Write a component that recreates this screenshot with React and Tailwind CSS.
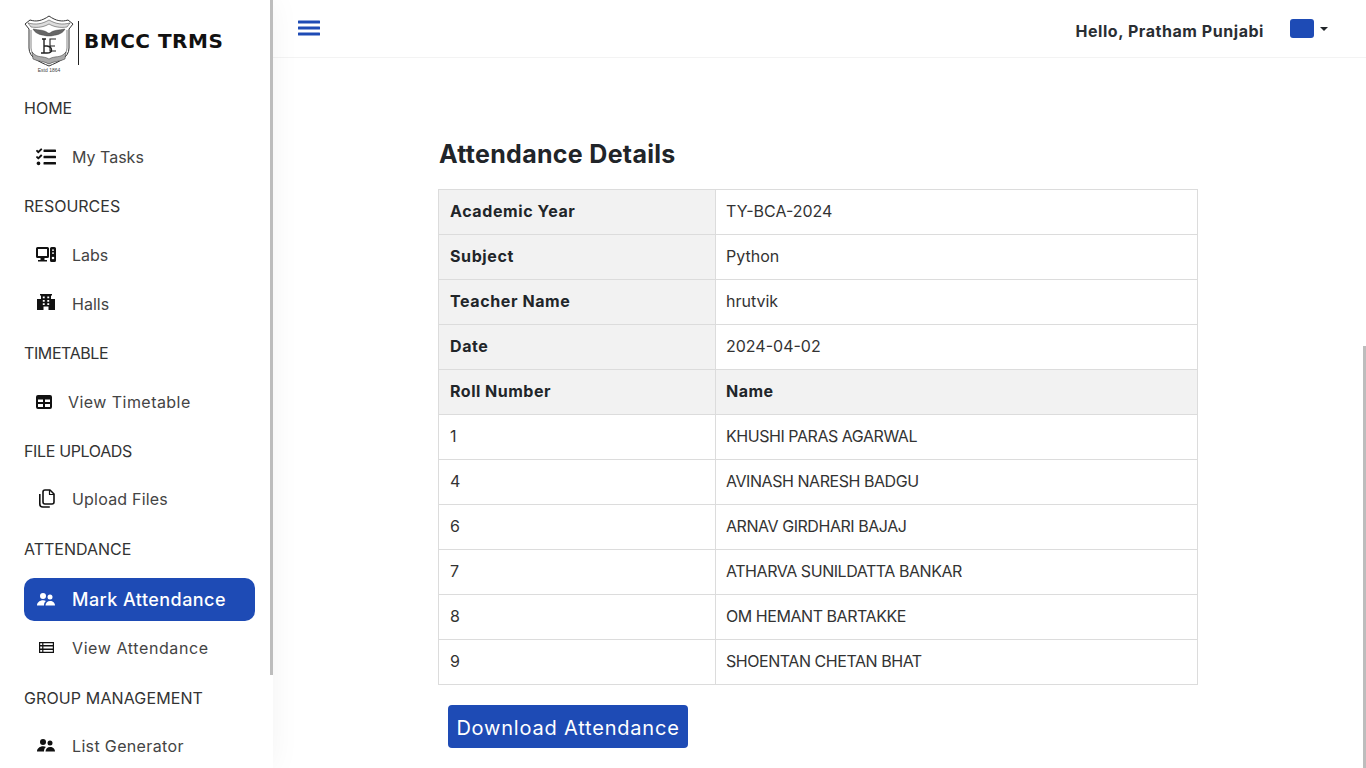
import { FaTasks } from 'react-icons/fa'

function LabsIcon({ className }) {
  return (
    <svg className={className} viewBox="0 0 20 16" fill="currentColor">
      <path fillRule="evenodd" d="M1.5 0h10A1.5 1.5 0 0 1 13 1.5v8a1.5 1.5 0 0 1-1.5 1.5H8.5v2H11v1.5H2V13h2.5v-2h-3A1.5 1.5 0 0 1 0 9.500v-8A1.500 1.500 0 0 1 1.500 0zM2 2v7h9V2z" />
      <path fillRule="evenodd" d="M15.500 0h3A1.500 1.500 0 0 1 20 1.500v12a1.500 1.500 0 0 1-1.500 1.500h-3a1.500 1.500 0 0 1-1.500-1.500v-12A1.500 1.500 0 0 1 15.500 0zM16 2.500v1.200h2V2.500zm0 3v1.200h2V5.500zm1 4.200a1.300 1.300 0 1 0 0 2.600 1.300 1.300 0 0 0 0-2.600z" />
    </svg>
  )
}

function HallsIcon({ className }) {
  return (
    <svg className={className} viewBox="0 0 18 16" fill="currentColor">
      <path fillRule="evenodd" d="M3 0h12v1.500h-1V5h4v11h-6.500v-3.500h-5V16H0V5h4V1.500H3zM5.800 2.500v1.800h1.900V2.500zm4.500 0v1.800h1.900V2.500zM5.800 6v1.800h1.900V6zm4.500 0v1.800h1.900V6zM5.800 9.300v1.800h1.900V9.300zm4.500 0v1.800h1.900V9.300z" />
    </svg>
  )
}

function TableIcon({ className }) {
  return (
    <svg className={className} viewBox="0 0 16 14" fill="currentColor">
      <path fillRule="evenodd" d="M2 0h12a2 2 0 0 1 2 2v10a2 2 0 0 1-2 2H2a2 2 0 0 1-2-2V2a2 2 0 0 1 2-2zM2 4.500V7h5V4.500zm7 0V7h5V4.500zM2 9v3h5V9zm7 0v3h5V9z" />
    </svg>
  )
}

function CopyIcon({ className }) {
  return (
    <svg className={className} viewBox="0 0 17 19" fill="none" stroke="currentColor" strokeWidth="1.600" strokeLinejoin="round">
      <path d="M7 1h5l4 4v8a2 2 0 0 1-2 2H7a2 2 0 0 1-2-2V3a2 2 0 0 1 2-2z" />
      <path d="M11.500 1v4.500H16" strokeWidth="1.200" />
      <path d="M1.800 5v10a3 3 0 0 0 3 3h7" />
    </svg>
  )
}

function PeopleIcon({ className }) {
  return (
    <svg className={className} viewBox="0 0 18 13" fill="currentColor">
      <circle cx="6" cy="3" r="3" />
      <circle cx="13" cy="4" r="2.500" />
      <path d="M0 12.500C0 9.500 3 7.300 6 7.300c1.200 0 2.300.3 3 .8-1.300 1-2 2.500-2 4.400z" />
      <path d="M8.500 12.500c0-2.600 2-4.500 4.700-4.500S18 9.900 18 12.500z" />
    </svg>
  )
}

function ListIcon({ className }) {
  return (
    <svg className={className} viewBox="0 0 15 11" fill="currentColor">
      <path fillRule="evenodd" d="M0 0h15v11H0zM1.200 1.200v1.900h2V1.200zm3.200 0v1.900h9.400V1.200zM1.200 4.500v2h2v-2zm3.200 0v2h9.400v-2zM1.200 7.900v1.900h2V7.900zm3.200 0v1.900h9.400V7.900z" />
    </svg>
  )
}

const nav = [
  { title: 'HOME', items: [{ label: 'My Tasks', icon: FaTasks, iconClass: 'w-[20px] h-[20px] ml-0', gap: 'ml-[16px]' }] },
  {
    title: 'RESOURCES',
    items: [
      { label: 'Labs', icon: LabsIcon, iconClass: 'w-[20px] h-[16px]', gap: 'ml-[16px]' },
      { label: 'Halls', icon: HallsIcon, iconClass: 'w-[18px] h-[16px] ml-px -mt-[3px]', gap: 'ml-[17px]' },
    ],
  },
  { title: 'TIMETABLE', tracking: 'tracking-[-0.4px]', items: [{ label: 'View Timetable', icon: TableIcon, iconClass: 'w-[16px] h-[14px]', gap: 'ml-[16px]', tracking: 'tracking-[0.45px]' }] },
  { title: 'FILE UPLOADS', tracking: 'tracking-[-0.35px]', items: [{ label: 'Upload Files', icon: CopyIcon, iconClass: 'w-[17px] h-[19px] ml-[2px]', gap: 'ml-[17px]', tracking: 'tracking-[0.2px]', lift: true }] },
  {
    title: 'ATTENDANCE',
    items: [
      { label: 'Mark Attendance', icon: PeopleIcon, iconClass: 'w-[18px] h-[13px] ml-px', gap: 'ml-[17px]', active: true, tracking: 'tracking-[0.45px]' },
      { label: 'View Attendance', icon: ListIcon, iconClass: 'w-[15px] h-[11px] ml-[3px]', gap: 'ml-[18px]', tracking: 'tracking-[0.6px]', lift: true },
    ],
  },
  { title: 'GROUP MANAGEMENT', tracking: 'tracking-[0.12px]', items: [{ label: 'List Generator', icon: PeopleIcon, iconClass: 'w-[18px] h-[13px] ml-px', gap: 'ml-[17px]', tracking: 'tracking-[0.35px]', lift: true }] },
]

const details = [
  ['Academic Year', 'TY-BCA-2024'],
  ['Subject', 'Python'],
  ['Teacher Name', 'hrutvik'],
  ['Date', '2024-04-02'],
]

const students = [
  ['1', 'KHUSHI PARAS AGARWAL'],
  ['4', 'AVINASH NARESH BADGU'],
  ['6', 'ARNAV GIRDHARI BAJAJ'],
  ['7', 'ATHARVA SUNILDATTA BANKAR'],
  ['8', 'OM HEMANT BARTAKKE'],
  ['9', 'SHOENTAN CHETAN BHAT'],
]

function Crest() {
  return (
    <svg width="50" height="58" viewBox="0 0 50 58" fill="none" stroke="#333" className="shrink-0">
      <path d="M1 9 L6 5 C12 7 18 6 25 1 C32 6 38 7 44 5 L49 9 L45 14 L45 33 C45 43 34 47 25 51 C16 47 5 43 5 33 L5 14 Z" strokeWidth="1" fill="#fff" />
      <path d="M4 8 C12 10 18 9 25 5 C32 9 38 10 46 8 L43 12 C36 13 30 12 25 9 C20 12 14 13 7 12 Z" strokeWidth="0.5" fill="#ddd" />
      <path d="M9 14 C15 15 21 15 24 18 L26 18 C29 15 35 15 41 14 C38 20 31 20 27 21 L23 21 C19 20 12 20 9 14 Z" fill="#666" strokeWidth="0.4" />
      <path d="M7 15 L7 33 C7 41 17 45 25 48.500 C33 45 43 41 43 33 L43 15" strokeWidth="0.6" />
      <path d="M18 24 L22 24 M20 24 L20 38 M17 38 L23 38 C29 38 29 32 23 31 L20 31" strokeWidth="1.400" stroke="#222" />
      <path d="M32 24 L26 24 L26 31 L31 31 M26 31 L26 36 L32 36" strokeWidth="1.100" stroke="#222" />
      <path d="M8 37 C14 44 18 40 25 44 C32 40 36 44 42 37 L41 44 C35 47 30 46 25 49 C20 46 15 47 9 44 Z" fill="#aaa" strokeWidth="0.500" />
      <text x="25" y="57" textAnchor="middle" fontSize="5" fill="#444" stroke="none" fontFamily="'Liberation Sans', sans-serif">Estd 1864</text>
    </svg>
  )
}

export default function App() {
  return (
    <div className="h-screen flex overflow-hidden bg-white text-[#212529] font-['Inter',sans-serif] relative">
      <aside className="w-[273px] shrink-0 h-screen overflow-hidden bg-white shadow-[0_0_28px_rgba(0,0,0,0.05)] relative z-10">
        <div className="h-[83px] pl-[24px] pt-[15px] flex items-start">
          <Crest />
          <div className="w-px h-[44px] bg-[#222] ml-[4px] mt-[6px]"></div>
          <span className="ml-[5px] mt-[15px] font-['DejaVu_Sans',sans-serif] font-bold text-[20px] leading-[22px] tracking-[0.5px] text-[#111] whitespace-nowrap">BMCC TRMS</span>
        </div>
        <nav>
          {nav.map((group) => (
            <div key={group.title}>
              <div className={`h-[49px] pl-[24px] flex items-center text-[16px] text-[#333] ${group.tracking || ''}`}>{group.title}</div>
              {group.items.map((item) => (
                <div
                  key={item.label}
                  className={item.active
                    ? 'h-[43px] mx-[24px] mt-[5px] mb-[3px] w-[231px] rounded-[10px] bg-[#1e4bb5] text-white flex items-center pl-[12px] text-[18px] font-medium'
                    : `h-[49px] ml-[24px] flex items-center pl-[12px] text-[16px] text-[#444] ${item.lift ? 'pb-[2px]' : ''}`}
                >
                  <item.icon className={`shrink-0 ${item.iconClass} ${item.active ? 'text-white' : 'text-[#111]'}`} />
                  <span className={`${item.gap} ${item.tracking || ''}`}>{item.label}</span>
                </div>
              ))}
            </div>
          ))}
        </nav>
        <div className="absolute right-0 top-0 w-[3px] h-[675px] bg-[#bdbdbd]"></div>
      </aside>

      <main className="flex-1 min-w-0">
        <header className="h-[58px] border-b border-[#f3f3f3] flex items-center justify-between pl-[25px] pr-[38px]">
          <svg width="22" height="16" viewBox="0 0 22 16" fill="#1e4bb5" className="-mt-[1px]">
            <rect width="22" height="3" y="0.500" rx="0.500" />
            <rect width="22" height="3" y="6.500" rx="0.500" />
            <rect width="22" height="3" y="12.500" rx="0.500" />
          </svg>
          <div className="flex items-center">
            <span className="text-[16px] font-bold tracking-[0.55px] text-[#2a2e33] mt-[5px]">Hello, Pratham Punjabi</span>
            <span className="w-[24px] h-[19px] rounded-[3px] bg-[#1e4bb5] ml-[26px]"></span>
            <span className="ml-[6px] border-x-[4px] border-x-transparent border-t-[4px] border-t-[#212529]"></span>
          </div>
        </header>
        <section className="w-[760px] ml-[165px] mt-[77px]">
          <h1 className="text-[25px] leading-[38px] font-bold tracking-[0.3px] text-[#212529] pl-px">Attendance Details</h1>
          <table className="w-full mt-[16px] border-collapse text-[16px] table-fixed">
            <tbody>
              {details.map(([k, v]) => (
                <tr key={k} className="h-[45px]">
                  <th className="w-[277px] border border-[#dcdcdc] bg-[#f2f2f2] px-[11px] pb-[2px] text-left font-bold tracking-[0.6px] text-[#212529]">{k}</th>
                  <td className="border border-[#dcdcdc] px-[10px] pb-[2px] text-[#333]">{v}</td>
                </tr>
              ))}
              <tr className="h-[45px]">
                <th className="border border-[#dcdcdc] bg-[#f2f2f2] px-[11px] pb-[2px] text-left font-bold tracking-[0.5px]">Roll Number</th>
                <th className="border border-[#dcdcdc] bg-[#f2f2f2] px-[10px] pb-[2px] text-left font-bold tracking-[0.5px]">Name</th>
              </tr>
              {students.map(([roll, name]) => (
                <tr key={roll} className="h-[45px]">
                  <td className="border border-[#dcdcdc] px-[11px] pb-[2px] text-[#333]">{roll}</td>
                  <td className="border border-[#dcdcdc] px-[10px] pb-[2px] text-[#333] tracking-[-0.45px]">{name}</td>
                </tr>
              ))}
            </tbody>
          </table>
          <button className="mt-[20px] ml-[10px] w-[240px] h-[43px] pt-[2px] rounded-[4px] bg-[#1e4bb5] text-white text-[20px] tracking-[0.8px] whitespace-nowrap">Download Attendance</button>
        </section>
      </main>
      <div className="absolute right-0 top-[346px] bottom-0 w-[3px] bg-[#bdbdbd]"></div>
    </div>
  )
}
